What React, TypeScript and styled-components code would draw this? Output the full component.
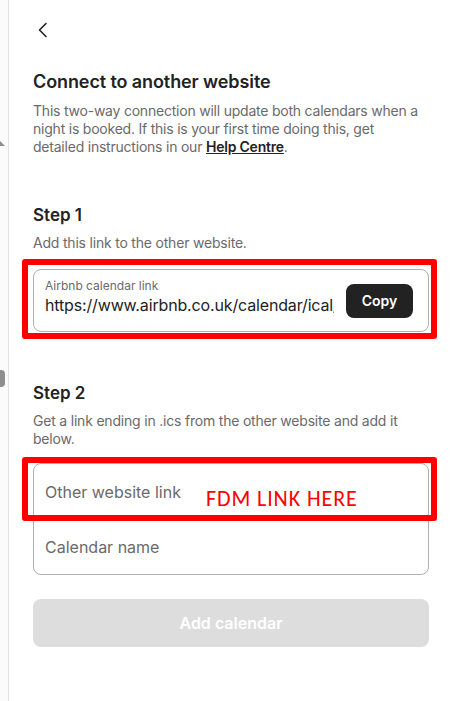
import React from "react";
import styled, { createGlobalStyle } from "styled-components";

const Global = createGlobalStyle`
  html, body { margin: 0; padding: 0; background: #ffffff; }
  body { font-family: Inter, "Noto Sans", sans-serif; color: #222222; }
  * { box-sizing: border-box; }
`;

const Page = styled.div`
  display: flex;
  width: 450px;
  height: 701px;
  overflow: hidden;
`;

const Strip = styled.div`
  width: 9px;
  flex: none;
  background: #fbfbfb;
  border-right: 1px solid #e2e2e2;
  display: flex;
  flex-direction: column;
`;

const Triangle = styled.div`
  margin-top: 141px;
  width: 0;
  height: 0;
  border-left: 5px solid transparent;
  border-bottom: 5px solid #8c8c8c;
  transform: scaleX(-1);
`;

const Grip = styled.div`
  margin-top: 224px;
  width: 5px;
  height: 17px;
  background: #8e8e8e;
  border-radius: 0 4px 4px 0;
`;

const Main = styled.div`
  flex: 1;
  min-width: 0;
  padding: 22px 21px 0 24px;
  display: flex;
  flex-direction: column;
`;

const Back = styled.button`
  width: 16px;
  height: 16px;
  padding: 0;
  margin-left: 2px;
  border: none;
  background: none;
  display: flex;
  align-items: center;
  justify-content: center;
`;

const Title = styled.h1`
  margin: 32px 0 0;
  font-size: 18px;
  line-height: 24px;
  font-weight: 600;
  color: #222222;
  letter-spacing: -0.1px;
`;

const Desc = styled.p`
  margin: 8px 0 0;
  max-width: 390px;
  font-size: 14px;
  line-height: 18px;
  color: #6a6a6a;
  letter-spacing: -0.22px;
`;

const HelpLink = styled.a`
  color: #222222;
  font-weight: 600;
  text-decoration: underline;
`;

const StepTitle = styled.h2<{ $top: number }>`
  margin: ${(p) => p.$top}px 0 0;
  font-size: 17px;
  line-height: 22px;
  font-weight: 600;
  color: #222222;
`;

const StepDesc = styled.p`
  margin: 8px 0 0;
  font-size: 14px;
  line-height: 18px;
  color: #6a6a6a;
  letter-spacing: -0.2px;
`;

const Annotated = styled.div`
  position: relative;
`;

const RedBox = styled.div<{ $top: number; $height: number }>`
  position: absolute;
  left: -11px;
  right: -8px;
  top: ${(p) => p.$top}px;
  height: ${(p) => p.$height}px;
  border: 6px solid #ff0000;
  border-radius: 3px;
  pointer-events: none;
`;

const RedNote = styled.span`
  position: absolute;
  left: 173px;
  font-family: Carlito, "Open Sans", "Liberation Sans", sans-serif;
  font-size: 22px;
  line-height: 24px;
  color: #ff0000;
  letter-spacing: 0.9px;
  white-space: nowrap;
`;

const LinkField = styled.div`
  margin-top: 17px;
  height: 63px;
  border: 1px solid #b0b0b0;
  border-radius: 8px;
  display: flex;
  align-items: center;
  padding: 0 15px 0 11px;
  gap: 12px;
`;

const LinkText = styled.div`
  flex: 1;
  min-width: 0;
  align-self: flex-start;
  padding-top: 8px;
  display: flex;
  flex-direction: column;
`;

const LinkLabel = styled.span`
  font-size: 12px;
  line-height: 16px;
  color: #6a6a6a;
`;

const LinkValue = styled.span`
  margin-top: 1px;
  font-size: 16px;
  line-height: 20px;
  color: #222222;
  white-space: nowrap;
  overflow: hidden;
  letter-spacing: -0.15px;
`;

const CopyButton = styled.button`
  flex: none;
  width: 67px;
  height: 34px;
  border: none;
  border-radius: 8px;
  background: #222222;
  color: #ffffff;
  font-family: Inter, sans-serif;
  font-size: 14px;
  font-weight: 600;
`;

const FieldGroup = styled.div`
  margin-top: 15px;
  border: 1px solid #b0b0b0;
  border-radius: 8px;
  display: flex;
  flex-direction: column;
`;

const FieldRow = styled.div<{ $divider?: boolean }>`
  height: 55px;
  display: flex;
  align-items: center;
  padding: 0 11px;
  font-size: 16px;
  color: #6a6a6a;
  border-top: ${(p) => (p.$divider ? "1px solid #b0b0b0" : "none")};
`;

const AddButton = styled.button`
  margin-top: 24px;
  height: 48px;
  width: 100%;
  border: none;
  border-radius: 8px;
  background: #dddddd;
  color: #ffffff;
  font-family: Inter, sans-serif;
  font-size: 16px;
  font-weight: 600;
`;

export default function App() {
  return (
    <>
      <Global />
      <Page>
        <Strip>
          <Triangle />
          <Grip />
        </Strip>
        <Main>
          <Back aria-label="Back">
            <svg width="16" height="16" viewBox="0 0 16 16" fill="none">
              <path d="M11 1.5 L4.5 8 L11 14.5" stroke="#222" strokeWidth="1.6" strokeLinecap="round" strokeLinejoin="round" />
            </svg>
          </Back>
          <Title>Connect to another website</Title>
          <Desc>
            This two-way connection will update both calendars when a night is booked. If this is your first time doing this, get detailed instructions in our <HelpLink>Help Centre</HelpLink>.
          </Desc>
          <StepTitle $top={48}>Step 1</StepTitle>
          <StepDesc>Add this link to the other website.</StepDesc>
          <Annotated>
            <LinkField>
              <LinkText>
                <LinkLabel>Airbnb calendar link</LinkLabel>
                <LinkValue>https://www.airbnb.co.uk/calendar/ical/12345678.ics?s=abcdef</LinkValue>
              </LinkText>
              <CopyButton>Copy</CopyButton>
            </LinkField>
            <RedBox $top={7} $height={80} />
          </Annotated>
          <StepTitle $top={50}>Step 2</StepTitle>
          <StepDesc>Get a link ending in .ics from the other website and add it below.</StepDesc>
          <Annotated>
            <FieldGroup>
              <FieldRow>Other website link</FieldRow>
              <FieldRow $divider>Calendar name</FieldRow>
            </FieldGroup>
            <RedBox $top={9} $height={64} />
            <RedNote style={{ top: 39 }}>FDM LINK HERE</RedNote>
          </Annotated>
          <AddButton disabled>Add calendar</AddButton>
        </Main>
      </Page>
    </>
  );
}
